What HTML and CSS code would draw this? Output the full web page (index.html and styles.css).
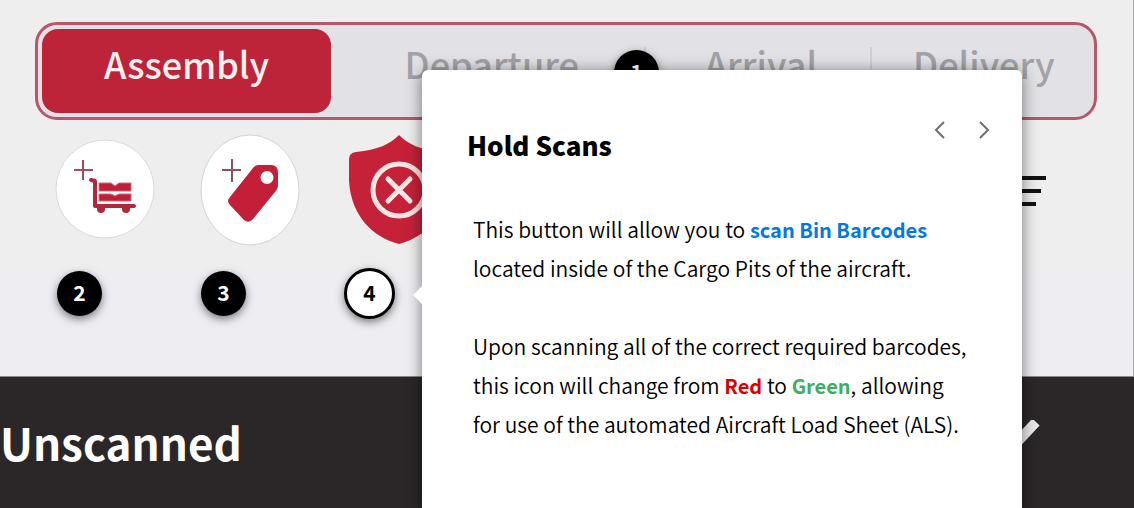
FILE: index.html
```html
<!DOCTYPE html>
<html lang="en">
<head>
<meta charset="utf-8">
<title>Hold Scans</title>
<link rel="stylesheet" href="styles.css">
</head>
<body>
<main class="stage">
  <section class="panel">
    <nav class="tabs" aria-label="Stages">
      <button class="tab tab-active" type="button">Assembly</button>
      <button class="tab" type="button">Departure</button>
      <button class="tab tab-divided" type="button">Arrival</button>
      <button class="tab tab-divided" type="button">Delivery</button>
    </nav>
    <div class="tools">
      <button class="tool" type="button" aria-label="Add cart">
        <svg width="100" height="112" viewBox="0 0 100 112">
          <circle cx="50" cy="55" r="49" fill="#fff" stroke="#ddd9da"/>
          <path d="M28 26v20M19 36h19" stroke="#a44c5e" stroke-width="2" fill="none"/>
          <path d="M36 46l4 1v25h39" stroke="#b5263c" stroke-width="4" fill="none" stroke-linejoin="round" stroke-linecap="round"/>
          <circle cx="46" cy="75" r="4" fill="#b5263c"/><circle cx="71" cy="75" r="4" fill="#b5263c"/>
          <path d="M44 49h12l4 3 4-3h12v8H44zM44 60h12l4 2 4-2h12v7H44z" fill="#bd2037" stroke="#d2677a"/>
        </svg>
      </button>
      <button class="tool" type="button" aria-label="Add tag">
        <svg width="100" height="112" viewBox="0 0 100 112">
          <ellipse cx="50" cy="56" rx="49" ry="55" fill="#fff" stroke="#d5d2d3"/>
          <path d="M32 25v23M22 36h19" stroke="#8f5060" stroke-width="2" fill="none"/>
          <path fill-rule="evenodd" d="M58 31h14q6 1 6 7v14q0 3-3 6L53 85q-4 5-9 1L30 71q-4-4 0-8L53 34q2-3 5-3zM67 37a6 6 0 1 0 0 13a6 6 0 1 0 0-13z" fill="#c41f39"/>
        </svg>
      </button>
      <button class="tool" type="button" aria-label="Hold scans">
        <svg width="104" height="112" viewBox="-4 0 104 112">
          <path d="M50 1C41 10 29 16 7 18Q0 19 0 25v22C2 81 23 103 50 110C77 103 98 81 100 47V25q0-6-7-7C71 16 59 10 50 1z" fill="#c52239"/>
          <circle cx="50" cy="56" r="26" fill="none" stroke="#fbe5e2" stroke-width="5"/>
          <path d="M39 45l22 22M61 45L39 67" fill="none" stroke="#fbe5e2" stroke-width="5" stroke-linecap="round"/>
        </svg>
      </button>
      <button class="tool tool-sort" type="button" aria-label="Sort">
        <svg width="48" height="112" viewBox="0 0 48 112">
          <path d="M0 44h47M5 57h37M10 70h27" fill="none" stroke="#111" stroke-width="4"/>
        </svg>
      </button>
    </div>
  </section>
  <section class="unscanned">
    <h2 class="unscanned-title">Unscanned</h2>
    <svg width="64" height="44" viewBox="0 0 64 44" aria-hidden="true">
      <path d="M4 2l28 30L60 2" fill="none" stroke="#ece9ea" stroke-width="10"/>
    </svg>
  </section>

  <button class="pin pin-1" type="button">1</button>
  <button class="pin pin-2" type="button">2</button>
  <button class="pin pin-3" type="button">3</button>
  <button class="pin pin-4 pin-open" type="button">4</button>

  <article class="popover">
    <header class="popover-head">
      <h1 class="popover-title">Hold Scans</h1>
      <button class="step" type="button" aria-label="Previous">
        <svg width="24" height="24" viewBox="0 0 24 24"><path d="M16 4l-8 8 8 8" fill="none" stroke="#707070" stroke-width="2"/></svg>
      </button>
      <button class="step" type="button" aria-label="Next">
        <svg width="24" height="24" viewBox="0 0 24 24"><path d="M8 4l8 8-8 8" fill="none" stroke="#707070" stroke-width="2"/></svg>
      </button>
    </header>
    <div class="popover-body">
      <p>This button will allow you to <strong class="blue">scan Bin Barcodes</strong> located inside of the Cargo Pits of the aircraft.</p>
      <p>Upon scanning all of the correct required barcodes, this icon will change from <strong class="red">Red</strong> to <strong class="green">Green</strong>, allowing for use of the automated Aircraft Load Sheet (ALS).</p>
    </div>
  </article>
</main>
</body>
</html>
```

FILE: styles.css
```css
* { box-sizing: border-box; }

body {
  margin: 0;
  font-family: "Noto Sans CJK SC", "Noto Sans", sans-serif;
  color: #000;
}

button {
  margin: 0;
  padding: 0;
  border: 0;
  background: none;
  font: inherit;
  color: inherit;
}

svg { display: block; }
h1, h2, p { margin: 0; }

.stage {
  position: relative;
  display: flex;
  flex-direction: column;
  height: 100vh;
  overflow: hidden;
  background: #2b2728;
}

.panel {
  padding: 22px 36px 130px 35px;
  background: linear-gradient(#eee 270px, #eeedf2 270px);
  border-right: 1px solid #aaa;
  border-bottom: 1px solid #8a888b;
}

.tabs {
  display: grid;
  grid-template-columns: 290fr 314fr 226fr 221fr;
  padding: 4px;
  border: 3px solid #b8566b;
  border-radius: 22px;
  background: #e2e1e5;
}

.tab {
  height: 84px;
  padding: 0 0 16px 8px;
  font-size: 36px;
  line-height: 48px;
  font-weight: 500;
  color: #a3a2a6;
}

.tab-active {
  padding-left: 0;
  border-radius: 16px;
  background: #bd2439;
  color: #fff0f0;
}

.tab-divided {
  background: linear-gradient(#cfced3, #cfced3) left center / 2px 48px no-repeat;
}

.tools {
  display: flex;
  gap: 45px;
  padding: 14px 50px 0 20px;
}

.tool-sort { margin-left: auto; }

.unscanned {
  flex: 1;
  display: flex;
  align-items: center;
  justify-content: space-between;
  padding: 0 94px 2px 0;
  color: #fff;
}

.unscanned-title {
  font-size: 44px;
  line-height: 64px;
  font-weight: 700;
}

.pin {
  position: absolute;
  width: 45px;
  height: 45px;
  padding-bottom: 2px;
  border-radius: 50%;
  background: #000;
  color: #fff;
  font-size: 21px;
  line-height: 43px;
  font-weight: 700;
  box-shadow: 0 3px 8px rgba(0, 0, 0, 0.5);
}

.pin-1 { left: 614px; top: 50px; }
.pin-2 { left: 57px; top: 271px; }
.pin-3 { left: 201px; top: 271px; }
.pin-4 { left: 344px; top: 268px; }

.pin-open {
  width: 51px;
  height: 51px;
  border: 3px solid #000;
  background: #fff;
  color: #000;
}

.popover {
  position: absolute;
  left: 422px;
  top: 70px;
  width: 600px;
  padding: 38px 16px 72px 45px;
  border-radius: 6px;
  background: #fff;
  box-shadow: 0 2px 16px rgba(0, 0, 0, 0.5);
}

.popover::before {
  content: "";
  position: absolute;
  left: -9px;
  top: 216px;
  border: solid transparent;
  border-width: 9px 9px 9px 0;
  border-right-color: #fff;
}

.popover-head {
  display: flex;
  align-items: flex-start;
}

.popover-title {
  flex: 1;
  padding-top: 17px;
  font-size: 26px;
  line-height: 40px;
  font-weight: 900;
}

.step {
  display: grid;
  place-items: center;
  width: 44px;
  height: 44px;
}

.popover-body {
  display: grid;
  gap: 39px;
  padding: 45px 36px 0 6px;
  font-size: 21px;
  line-height: 39px;
  font-weight: 350;
}

.popover-body strong {
  font-size: 20px;
  font-weight: 700;
}

.blue { color: #0078e7; }
.red { color: #dc0000; }
.green { color: #3fae62; }
```
